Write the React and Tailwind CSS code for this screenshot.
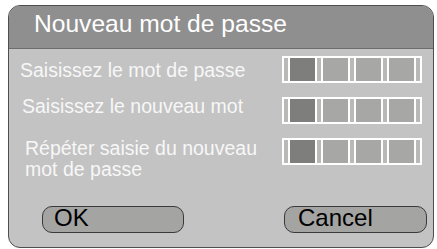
const Strip = () => <div className="w-[4px] h-full bg-[#b9b9b8]" />;

const PinBox = () => (
  <div className="flex h-[27px] border-2 border-white bg-[#b9b9b8]">
    <Strip />
    <div className="w-[29px] h-full border-x-2 border-white bg-[#7e7f7d]" />
    <Strip />
    <div className="w-[29px] h-full border-x-2 border-white bg-[#a7a7a5]" />
    <Strip />
    <div className="w-[29px] h-full border-x-2 border-white bg-[#a7a7a5]" />
    <Strip />
    <div className="w-[29px] h-full border-x-2 border-white bg-[#a7a7a5]" />
    <Strip />
  </div>
);

const Button = ({ label, className }) => (
  <div
    className={`h-[27px] rounded-[10px] border border-[#3a3a3a] bg-[#a4a4a3] text-[24px] leading-[22px] text-black ${className}`}
  >
    {label}
  </div>
);

export default function App() {
  return (
    <div
      className="w-[437px] h-[249px] bg-white pt-[5px] pl-[8px]"
      style={{ fontFamily: '"Liberation Sans", Arial, sans-serif' }}
    >
      <div className="w-[426px] h-[243px] rounded-[12px] border border-[#4e4e4e] bg-[#c3c3c3] overflow-hidden flex flex-col">
        <div className="h-[43px] bg-[#8f8f8f] border-b border-[#6c6c6c] pl-[25px] pt-[4px]">
          <span className="text-[24.6px] leading-[28px] text-white">Nouveau mot de passe</span>
        </div>

        <div className="flex flex-col pt-[7px] pl-[11px] pr-[11px] text-[19.5px] leading-[21px] text-[#f7f7f7]">
          <div className="flex justify-between items-start">
            <span className="mt-[4px]">Saisissez le mot de passe</span>
            <PinBox />
          </div>
          <div className="flex justify-between items-start mt-[14px]">
            <span className="-mt-[1px] pl-[2px]">Saisissez le nouveau mot</span>
            <PinBox />
          </div>
          <div className="flex justify-between items-start mt-[14px]">
            <span className="pl-[5px]">
              Répéter saisie du nouveau
              <br />
              mot de passe
            </span>
            <PinBox />
          </div>
        </div>

        <div className="flex justify-between pl-[33px] pr-[6px] mt-[26px]">
          <Button label="OK" className="w-[142px] pl-[11px]" />
          <Button label="Cancel" className="w-[143px] pl-[13px]" />
        </div>
      </div>
    </div>
  );
}
